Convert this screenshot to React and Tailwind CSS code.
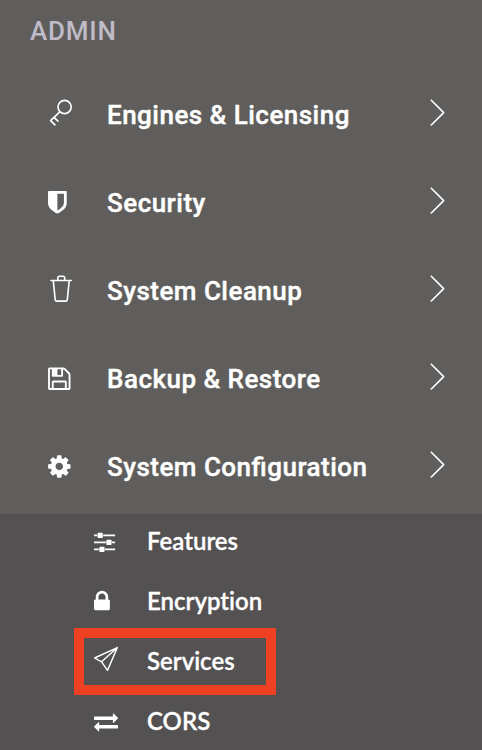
const COG = 'M1152 896q0-106-75-181t-181-75-181 75-75 181 75 181 181 75 181-75 75-181zm512-109v222q0 12-8 23t-20 13l-185 28q-19 54-39 91 35 50 107 138 10 12 10 25t-9 23q-27 37-99 108t-94 71q-12 0-26-9l-138-108q-44 23-91 38-16 136-29 186-7 28-36 28h-222q-14 0-24.5-8.5t-11.5-21.5l-28-184q-49-16-90-37l-141 107q-10 9-25 9-14 0-25-11-126-114-165-168-7-10-7-23 0-12 8-23 15-21 51-66.5t54-70.5q-27-50-41-99l-183-27q-13-2-21-12.5t-8-23.5v-222q0-12 8-23t19-13l186-28q14-46 39-92-40-57-107-138-10-12-10-24 0-10 9-23 26-36 98.5-107.5t94.5-71.5q13 0 26 10l138 107q44-23 91-38 16-136 29-186 7-28 36-28h222q14 0 24.5 8.5t11.5 21.5l28 184q49 16 90 37l142-107q9-9 24-9 13 0 25 10 129 119 165 170 7 8 7 22 0 12-8 23-15 21-51 66.5t-54 70.5q26 50 41 98l183 28q13 2 21 12.5t8 23.5z';
const LOCK = 'M640 768h512v-192q0-106-75-181t-181-75-181 75-75 181v192zm832 96v576q0 40-28 68t-68 28h-960q-40 0-68-28t-28-68v-576q0-40 28-68t68-28h32v-192q0-184 132-316t316-132 316 132 132 316v192h32q40 0 68 28t28 68z';
const SHIELD = 'M1344 960v-640h-448v1137q119-63 213-137 235-184 235-360zm192-768v768q0 86-33.5 170.5t-83 150-118 127.5-126.5 103-121 77.5-89.5 49.5-42.5 20q-12 6-26 6t-26-6q-16-7-42.5-20t-89.5-49.5-121-77.5-126.5-103-118-127.5-83-150-33.5-170.5v-768q0-26 19-45t45-19h1152q26 0 45 19t19 45z';
const FLOPPY = 'M512 1536h768v-384h-768v384zm896 0h128v-896q0-14-10-38.5t-20-34.5l-281-281q-10-10-34-20t-39-10v416q0 40-28 68t-68 28h-576q-40 0-68-28t-28-68v-416h-128v1280h128v-416q0-40 28-68t68-28h832q40 0 68 28t28 68v416zm-384-928v-320q0-13-9.5-22.5t-22.5-9.5h-192q-13 0-22.5 9.5t-9.5 22.5v320q0 13 9.5 22.5t22.5 9.5h192q13 0 22.5-9.5t9.5-22.5zm640 32v928q0 40-28 68t-68 28h-1344q-40 0-68-28t-28-68v-1344q0-40 28-68t68-28h928q40 0 88 20t76 48l280 280q28 28 48 76t20 88z';
const SLIDERS = 'M480 1408v128h-352v-128h352zm352-128q26 0 45 19t19 45v256q0 26-19 45t-45 19h-256q-26 0-45-19t-19-45v-256q0-26 19-45t45-19h256zm160-384v128h-864v-128h864zm-640-512v128h-224v-128h224zm1312 1024v128h-736v-128h736zm-960-1152q26 0 45 19t19 45v256q0 26-19 45t-45 19h-256q-26 0-45-19t-19-45v-256q0-26 19-45t45-19h256zm640 512q26 0 45 19t19 45v256q0 26-19 45t-45 19h-256q-26 0-45-19t-19-45v-256q0-26 19-45t45-19h256zm320 128v128h-224v-128h224zm0-512v128h-864v-128h864z';
const EXCHANGE = 'M1792 1184v192q0 13-9.5 22.5t-22.5 9.5h-1376v192q0 13-9.5 22.5t-22.5 9.5q-12 0-24-10l-319-320q-9-9-9-22 0-14 9-23l320-320q9-9 23-9 13 0 22.5 9.5t9.5 22.5v192h1376q13 0 22.5 9.5t9.5 22.5zm0-544q0 14-9 23l-320 320q-9 9-23 9-13 0-22.5-9.5t-9.5-22.5v-192h-1376q-13 0-22.5-9.5t-9.5-22.5v-192q0-13 9.5-22.5t22.5-9.5h1376v-192q0-14 9-23t23-9q12 0 24 10l319 319q9 9 9 23z';

/* Solid glyph drawn on a 1792-unit grid, placed inside the 40px icon box. */
function Solid({ d, x, y, scale }) {
  return <path d={d} fill="currentColor" transform={`translate(${x} ${y}) scale(${scale})`} />;
}

const line = { fill: 'none', stroke: 'currentColor', strokeWidth: 1.6, strokeLinejoin: 'round', strokeLinecap: 'round' };

const key = (
  <g {...line}>
    <circle cx="24.6" cy="13" r="6.6" />
    <path d="M19.8 17.8 10.6 26.6l4.4 4.2M14 23.4l4 3.8" />
  </g>
);

const trash = (
  <g {...line}>
    <path d="M11 10.5H31.3M17.8 10.3V8Q17.8 6.3 19.5 6.3H23Q24.7 6.3 24.7 8V10.3M13.3 10.8 15.2 29.6Q15.4 31.1 16.8 31.1H25.7Q27.1 31.1 27.3 29.6L29.2 10.8" />
  </g>
);

const plane = (
  <g {...line} strokeWidth="1.4">
    <path d="M4.6 17 27.3 6.6 17.5 29.4 11.6 20.8ZM27.3 6.6 11.6 20.8" />
  </g>
);

const menu = [
  { label: 'Engines & Licensing', icon: key },
  { label: 'Security', icon: <Solid d={SHIELD} x={4.3} y={7.2} scale={0.0146} /> },
  { label: 'System Cleanup', icon: trash },
  { label: 'Backup & Restore', icon: <Solid d={FLOPPY} x={6.2} y={7.6} scale={0.0146} /> },
  { label: 'System Configuration', icon: <Solid d={COG} x={6.2} y={7.4} scale={0.0146} /> },
];

const submenu = [
  { label: 'Features', icon: <Solid d={SLIDERS} x={2.3} y={8.2} scale={0.0137} /> },
  { label: 'Encryption', icon: <Solid d={LOCK} x={-0.4} y={8} scale={0.0138} /> },
  { label: 'Services', icon: plane, active: true },
  { label: 'CORS', icon: <Solid d={EXCHANGE} x={4} y={8.6} scale={0.0134} /> },
];

function IconBox({ children }) {
  return <svg viewBox="0 0 40 40" className="h-10 w-10 shrink-0">{children}</svg>;
}

export default function App() {
  return (
    <nav className="flex h-[750px] w-[482px] flex-col overflow-hidden bg-[#5f5e5c] text-white">
      <h2 className="h-[70px] shrink-0 pl-[30px] pt-[11px] font-['Roboto',sans-serif] text-[26px] font-medium leading-10 tracking-[0.8px] text-[#bfbbc7]">ADMIN</h2>
      <ul className="h-[444px] shrink-0">
        {menu.map((item) => (
          <li key={item.label} className="flex h-[88px] items-center pl-10 pr-[34px]">
            <IconBox>{item.icon}</IconBox>
            <span className="ml-[27px] flex-1 whitespace-nowrap pt-0.5 font-['Roboto',sans-serif] text-[26px] font-medium leading-10 tracking-[0.48px] [font-feature-settings:'liga'_1] [-webkit-text-stroke:0.4px_white]">{item.label}</span>
            <svg viewBox="0 0 24 30" className="-mt-[3px] h-[30px] w-6 shrink-0">
              <path d="M7.3 2.2 19.7 14.6 7.3 27" {...line} strokeWidth="1.6" />
            </svg>
          </li>
        ))}
      </ul>
      <ul className="min-h-0 flex-1 bg-[#535152]">
        {submenu.map((item) => (
          <li key={item.label} className="flex h-[60px] items-start pl-[74px]">
            <div className={item.active ? '-mt-1.5 flex h-[67px] w-[202px] shrink-0 items-center border-[10px] border-[#ee4023] pb-px pl-1.5' : 'flex h-[54px] items-center pl-4'}>
              <IconBox>{item.icon}</IconBox>
              <span className="ml-[17px] whitespace-nowrap font-['Lato',sans-serif] text-[24px] font-semibold leading-10 [font-variant-ligatures:none] [-webkit-text-stroke:0.3px_white]">{item.label}</span>
            </div>
          </li>
        ))}
      </ul>
    </nav>
  );
}
